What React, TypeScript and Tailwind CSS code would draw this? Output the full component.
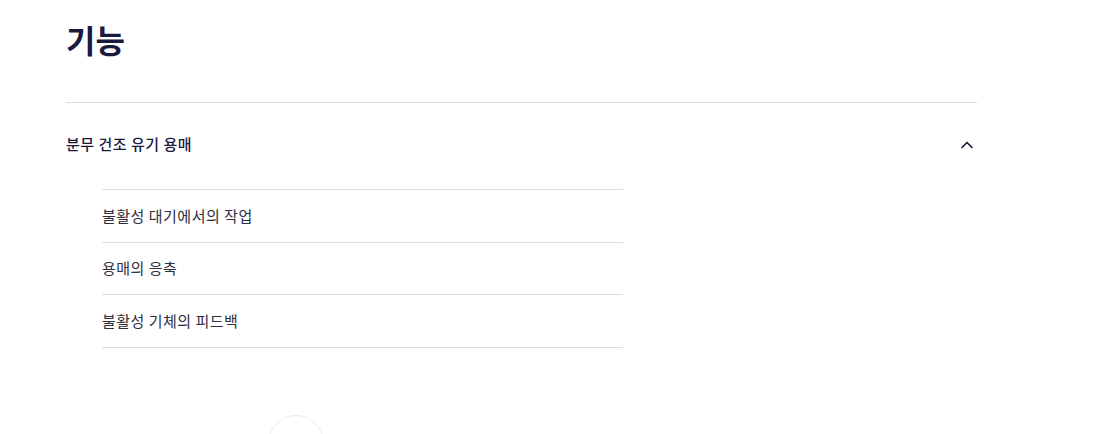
import React, { useState } from 'react';
import { ChevronUp, ChevronDown } from 'lucide-react';

const items = ['불활성 대기에서의 작업', '용매의 응축', '불활성 기체의 피드백'];

export default function App() {
  const [open, setOpen] = useState(true);

  return (
    <div
      className="relative h-[434px] w-[1100px] overflow-hidden bg-white"
      style={{ fontFamily: '"Noto Sans CJK KR", "Noto Sans", sans-serif' }}
    >
      <div className="ml-[66px] w-[911px] pt-[17px]">
        {/* Section title */}
        <h1 className="text-[32px] font-bold leading-[44px] text-[#1b1a3d]">기능</h1>

        <div className="mt-[41px] border-t border-[#dcdcdc]">
          {/* Accordion header */}
          <button
            onClick={() => setOpen(!open)}
            className="flex h-[86px] w-full items-center justify-between pb-[3px] text-left"
          >
            <span className="text-[15px] font-medium tracking-[0.5px] text-[#1b1a3d]">분무 건조 유기 용매</span>
            {open ? (
              <ChevronUp className="h-5 w-5 text-[#1b1a3d]" strokeWidth={2} />
            ) : (
              <ChevronDown className="h-5 w-5 text-[#1b1a3d]" strokeWidth={2} />
            )}
          </button>

          {/* Sub items */}
          {open && (
            <ul className="ml-[36px] w-[521px] border-b border-[#dcdcdc]">
              {items.map((item) => (
                <li
                  key={item}
                  className="flex h-[52.6px] items-center border-t border-[#dcdcdc] text-[15px] tracking-[0.5px] text-[#2e2e3e]"
                >
                  {item}
                </li>
              ))}
            </ul>
          )}
        </div>
      </div>

      {/* Partial circle button at the bottom */}
      <div className="absolute left-[268px] top-[415px] h-[56px] w-[56px] rounded-full border border-[#ececec]" />
    </div>
  );
}
